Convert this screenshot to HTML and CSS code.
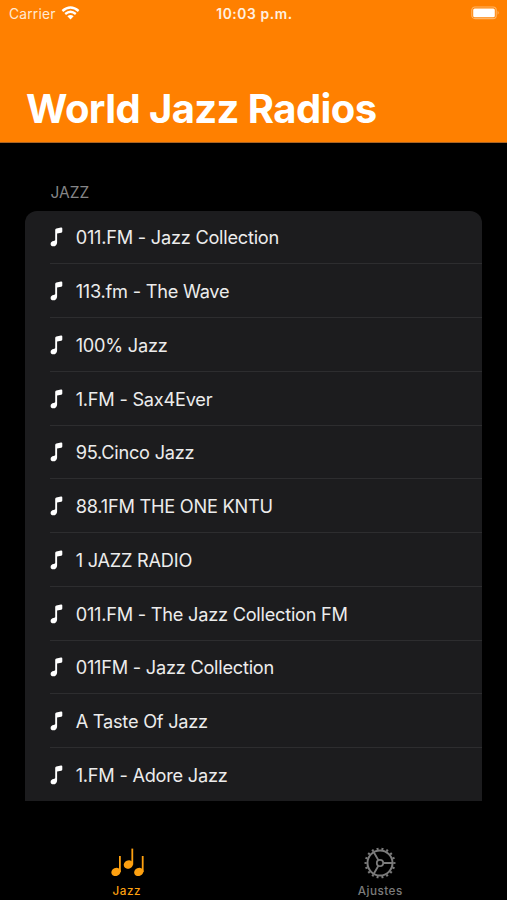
FILE: index.html
```html
<!DOCTYPE html>
<html lang="es">
<head>
<meta charset="utf-8">
<title>World Jazz Radios</title>
<link rel="stylesheet" href="styles.css">
</head>
<body>
<svg width="0" height="0" class="defs">
  <symbol id="note" viewBox="0 0 14 20">
    <path d="M5.2 2.9 Q5.2 1.8 6.4 1.5 L11 .6 Q12.3.4 12.3 1.6 V4.6 Q12.3 5.5 11.3 5.7 L7.1 6.6 V15.4 C7.1 17.8 5.5 19.3 3.3 19.3 C1.6 19.3.6 18.3.6 16.9 C.6 15.2 1.8 14.2 3.6 13.9 C4.8 13.7 5.2 13.6 5.2 12.8Z"/>
  </symbol>
</svg>
<header class="header">
  <div class="status">
    <div class="carrier"><span>Carrier</span>
      <svg class="wifi" width="19" height="14" viewBox="0 0 19 14">
        <path d="M1.4 5 Q9.5-1.9 17.6 5M4.2 8 Q9.5 3.5 14.8 8" fill="none" stroke="#fff" stroke-width="2.3"/>
        <path d="M6.4 10.2 Q9.5 7.7 12.6 10.2 L9.5 13.4Z" fill="#fff"/>
      </svg>
    </div>
    <div class="time">10:03 p.m.</div>
    <svg class="battery" width="29" height="14" viewBox="0 0 29 14">
      <rect x=".8" y="1" width="24.4" height="11.6" rx="3.2" fill="none" stroke="#ffb566" stroke-width="1.1"/>
      <rect x="2.2" y="2.4" width="21.6" height="8.8" rx="1.5" fill="#fff"/>
      <path d="M26.6 4.8 Q28.8 6.8 26.6 8.8Z" fill="#ffb566"/>
    </svg>
  </div>
  <h1 class="title">World Jazz Radios</h1>
</header>
<main class="content">
  <h2 class="section">JAZZ</h2>
  <ul class="list">
    <li><svg class="note"><use href="#note"/></svg><span>011.FM - Jazz Collection</span></li>
    <li><svg class="note"><use href="#note"/></svg><span>113.fm - The Wave</span></li>
    <li><svg class="note"><use href="#note"/></svg><span>100% Jazz</span></li>
    <li><svg class="note"><use href="#note"/></svg><span>1.FM - Sax4Ever</span></li>
    <li><svg class="note"><use href="#note"/></svg><span>95.Cinco Jazz</span></li>
    <li><svg class="note"><use href="#note"/></svg><span>88.1FM THE ONE KNTU</span></li>
    <li><svg class="note"><use href="#note"/></svg><span>1 JAZZ RADIO</span></li>
    <li><svg class="note"><use href="#note"/></svg><span>011.FM - The Jazz Collection FM</span></li>
    <li><svg class="note"><use href="#note"/></svg><span>011FM - Jazz Collection</span></li>
    <li><svg class="note"><use href="#note"/></svg><span>A Taste Of Jazz</span></li>
    <li><svg class="note"><use href="#note"/></svg><span>1.FM - Adore Jazz</span></li>
  </ul>
</main>
<nav class="tabs">
  <a class="tab active">
    <svg width="36" height="34" viewBox="-1 -1 36 34" fill="currentColor">
      <g id="quarter"><ellipse cx="6" cy="24.9" rx="4.8" ry="4" transform="rotate(-25 6 24.9)"/><path d="M9 9h1.8v16H9z"/></g>
      <use href="#quarter" x="12.4" y="-7.4"/>
      <use href="#quarter" x="22.8"/>
    </svg>
    <span>Jazz</span>
  </a>
  <a class="tab">
    <svg width="36" height="34" viewBox="-18 -17 36 34" fill="none" stroke="currentColor">
      <circle r="12.5" stroke-width="2"/>
      <circle r="14.3" stroke-width="2.3" pathLength="180" stroke-dasharray="4 6" stroke-dashoffset="2"/>
      <circle r="3.2" stroke-width="1.8"/>
      <path d="M3.2 0H12.5M-1.6-2.8L-6.2-10.8M-1.6 2.8L-6.2 10.8" stroke-width="1.8"/>
    </svg>
    <span>Ajustes</span>
  </a>
</nav>
</body>
</html>
```
FILE: styles.css
```css
* { box-sizing: border-box; }
body {
  margin: 0;
  width: 507px;
  height: 900px;
  overflow: hidden;
  display: flex;
  flex-direction: column;
  background: #000;
  color: #ececec;
  font-family: Inter, "Liberation Sans", sans-serif;
}
.defs { position: absolute; }
.header {
  height: 143px;
  flex: none;
  background: #ff8000;
  border-bottom: 1px solid #a96425;
  color: #fff;
}
.status {
  height: 28px;
  padding: 0 7px 0 9px;
  display: grid;
  grid-template-columns: 1fr auto 1fr;
  align-items: center;
  font-size: 13.8px;
}
.carrier { display: flex; align-items: center; gap: 5px; color: #ffe9d2; letter-spacing: .2px; }
.wifi { margin-top: -2px; }
.time { font-weight: 600; color: #fff0e0; letter-spacing: .6px; }
.battery { justify-self: end; margin-top: -2px; }
.title {
  margin: 56px 0 0 26px;
  font-size: 40px;
  line-height: 50px;
  font-weight: 700;
  letter-spacing: -.6px;
  white-space: nowrap;
}
.content { padding: 40px 25px 0 25.4px; height: 658px; flex: none; overflow: hidden; }
.section {
  margin: 0 0 7.5px 25px;
  font-size: 15.5px;
  line-height: 20px;
  font-weight: 400;
  color: #858587;
}
.list {
  list-style: none;
  margin: 0;
  padding: 0;
  background: #1c1c1e;
  border-radius: 12px 12px 0 0;
}
.list li {
  height: 53.75px;
  margin-left: 25px;
  padding-top: 1px;
  display: flex;
  align-items: center;
  gap: 11.3px;
  font-size: 18.2px;
  letter-spacing: -.24px;
  white-space: nowrap;
  border-bottom: 1px solid #2d2d2f;
}
.list li:last-child { border-bottom: 0; }
.note { width: 14px; height: 20px; fill: #fff; }
.tabs { flex: 1; display: flex; padding-top: 45px; }
.tab {
  flex: 1;
  display: flex;
  flex-direction: column;
  align-items: center;
  color: #7b7b7b;
  font-size: 11.7px;
  font-weight: 500;
  letter-spacing: .5px;
  line-height: 14px;
}
.tab svg { display: block; flex: none; margin-bottom: 4px; }
.active { color: #fda010; }
```
